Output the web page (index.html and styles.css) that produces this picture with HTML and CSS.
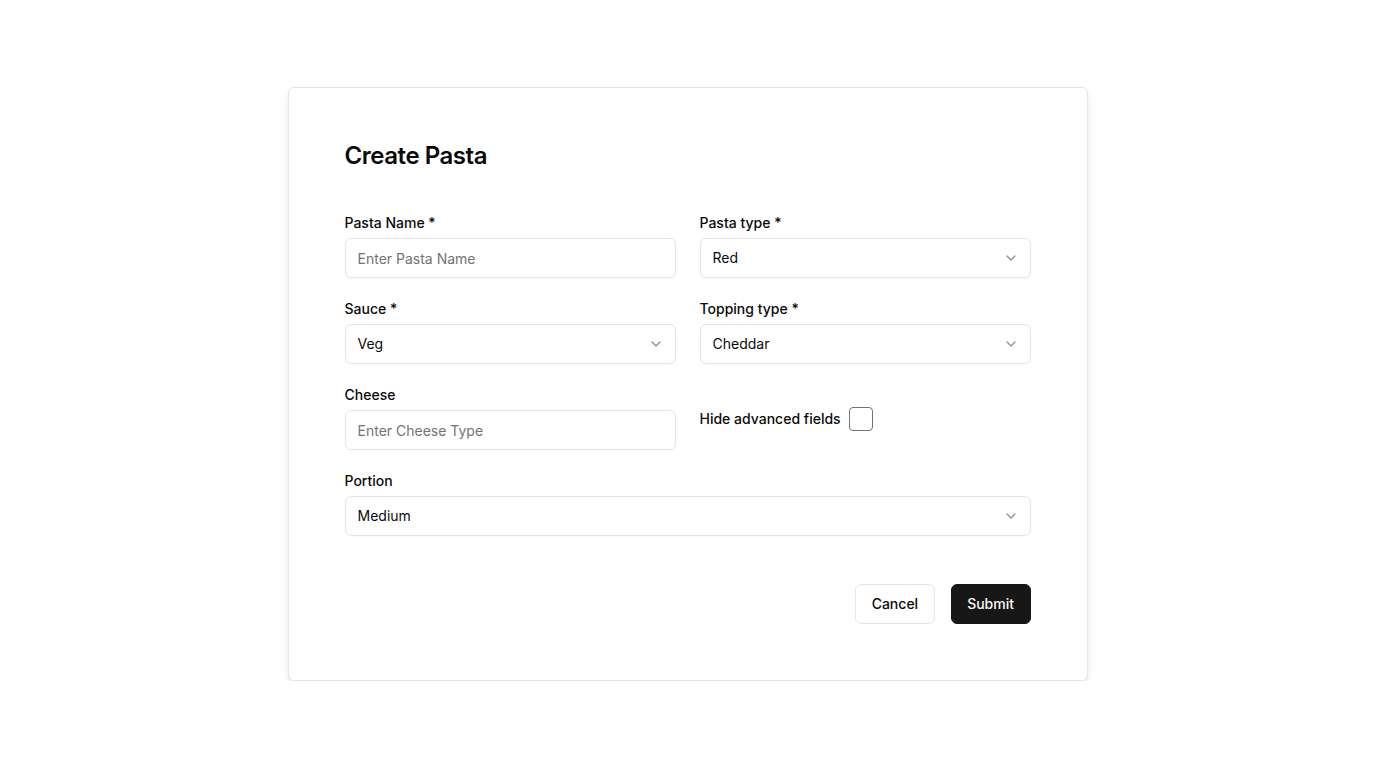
FILE: index.html
```html
<!DOCTYPE html>
<html lang="en">
<head>
<meta charset="utf-8">
<title>Create Pasta</title>
<link rel="stylesheet" href="styles.css">
</head>
<body>
<main class="page">
  <form class="card">
    <h1 class="title">Create Pasta</h1>
    <div class="grid">
      <div class="field">
        <label class="label">Pasta Name *</label>
        <div class="input placeholder">Enter Pasta Name</div>
      </div>
      <div class="field">
        <label class="label">Pasta type *</label>
        <div class="input select"><span>Red</span><svg class="chev" viewBox="0 0 16 16"><path d="M4 6l4 4 4-4"/></svg></div>
      </div>
      <div class="field">
        <label class="label">Sauce *</label>
        <div class="input select"><span>Veg</span><svg class="chev" viewBox="0 0 16 16"><path d="M4 6l4 4 4-4"/></svg></div>
      </div>
      <div class="field">
        <label class="label">Topping type *</label>
        <div class="input select"><span>Cheddar</span><svg class="chev" viewBox="0 0 16 16"><path d="M4 6l4 4 4-4"/></svg></div>
      </div>
      <div class="field">
        <label class="label">Cheese</label>
        <div class="input placeholder">Enter Cheese Type</div>
      </div>
      <div class="field check-field">
        <label class="label check-label">Hide advanced fields</label>
        <span class="checkbox"></span>
      </div>
      <div class="field wide">
        <label class="label">Portion</label>
        <div class="input select"><span>Medium</span><svg class="chev" viewBox="0 0 16 16"><path d="M4 6l4 4 4-4"/></svg></div>
      </div>
    </div>
    <div class="actions">
      <button type="button" class="btn btn-outline">Cancel</button>
      <button type="button" class="btn btn-primary">Submit</button>
    </div>
  </form>
</main>
</body>
</html>
```

FILE: styles.css
```css
* { box-sizing: border-box; }
html, body { margin: 0; padding: 0; background: #fff; }
body {
  font-family: Inter, "Noto Sans", sans-serif;
  color: #0a0a0a;
  -webkit-font-smoothing: antialiased;
}
.page {
  display: flex;
  justify-content: center;
  padding-top: 87px;
}
.card {
  width: 800px;
  margin-left: -1px;
  border: 1px solid #e5e5e5;
  border-radius: 6px;
  background: #fff;
  box-shadow: 0 8px 14px -4px rgba(0,0,0,0.12), 0 2px 5px -1px rgba(0,0,0,0.08);
  padding: 56px;
}
.title {
  margin: 0 0 46px 0;
  font-size: 24px;
  line-height: 24px;
  font-weight: 600;
  letter-spacing: -0.45px;
}
.grid {
  display: grid;
  grid-template-columns: 1fr 1fr;
  column-gap: 24px;
  row-gap: 22px;
}
.field {
  display: flex;
  flex-direction: column;
}
.wide { grid-column: 1 / span 2; }
.label {
  font-size: 14px;
  line-height: 18px;
  font-weight: 500;
  margin-bottom: 6px;
}
.input {
  height: 40px;
  border: 1px solid #e5e5e5;
  border-radius: 6px;
  padding: 0 12px;
  display: flex;
  align-items: center;
  font-size: 14px;
  box-shadow: 0 1px 2px rgba(0,0,0,0.03);
}
.placeholder { color: #737373; }
.select { justify-content: space-between; }
.select span { margin-top: -2px; }
.chev {
  width: 16px;
  height: 16px;
  fill: none;
  stroke: #8a8a8a;
  stroke-width: 1.2;
  stroke-linecap: round;
  stroke-linejoin: round;
  margin-right: -1px;
  margin-top: -1px;
}
.check-field {
  flex-direction: row;
  align-items: center;
  gap: 8px;
  padding-top: 2px;
}
.check-label { margin-bottom: 0; }
.checkbox {
  width: 24px;
  height: 24px;
  border: 1px solid #737373;
  border-radius: 4px;
  background: #fff;
}
.actions {
  display: flex;
  justify-content: flex-end;
  gap: 16px;
  margin-top: 48px;
}
.btn {
  height: 40px;
  padding: 0 15.5px 2px;
  border-radius: 6px;
  font-family: inherit;
  font-size: 14px;
  font-weight: 500;
  cursor: pointer;
}
.btn-outline {
  background: #fff;
  border: 1px solid #e5e5e5;
  color: #0a0a0a;
}
.btn-primary {
  background: #171717;
  border: 1px solid #171717;
  color: #fafafa;
}
```
